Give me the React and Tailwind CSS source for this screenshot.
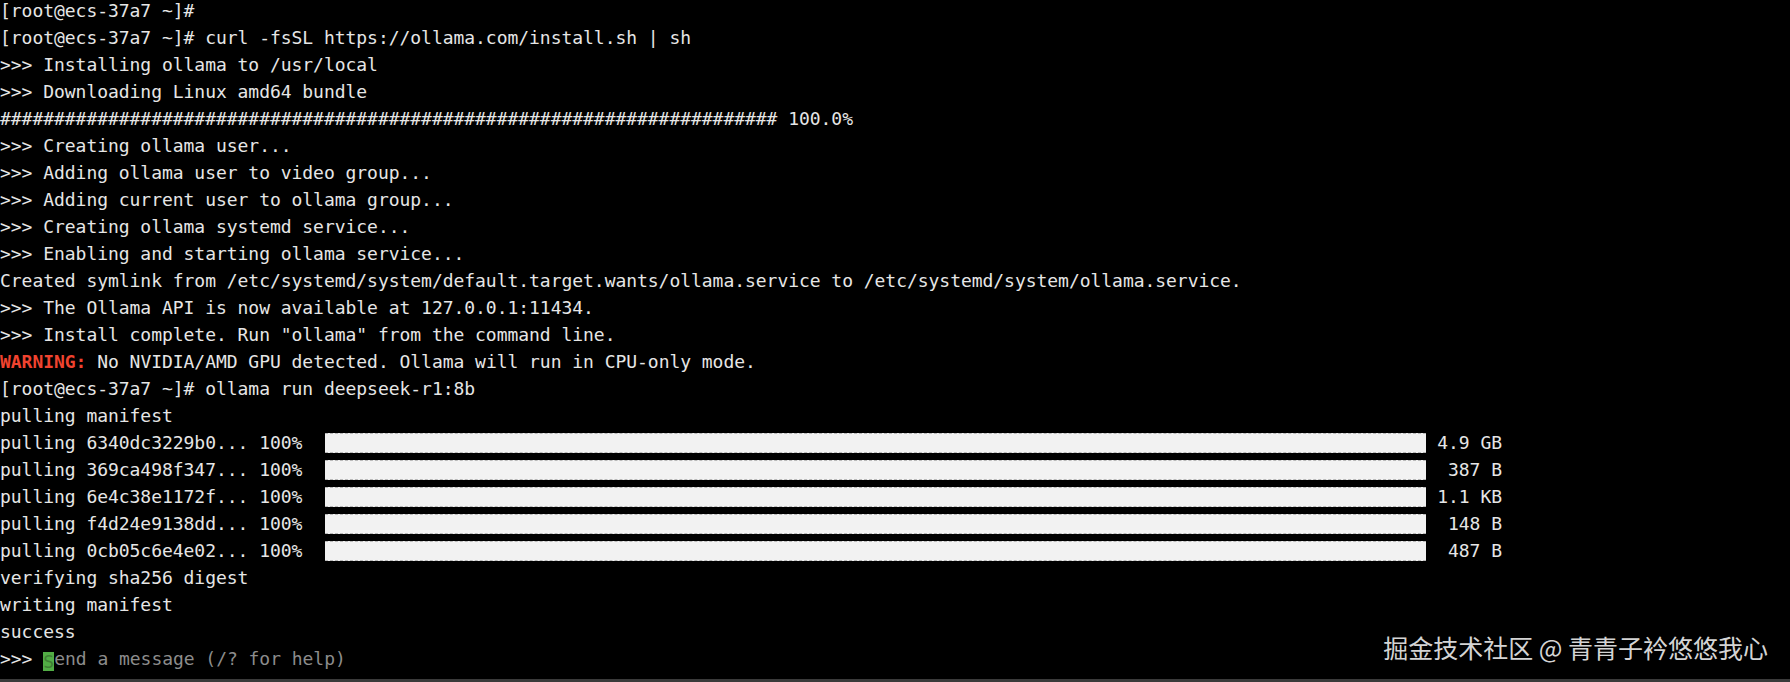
const mono = { fontFamily: '"DejaVu Sans Mono", "Liberation Mono", monospace' };

const plainLines = [
  '[root@ecs-37a7 ~]#',
  '[root@ecs-37a7 ~]# curl -fsSL https://ollama.com/install.sh | sh',
  '>>> Installing ollama to /usr/local',
  '>>> Downloading Linux amd64 bundle',
  '#'.repeat(72) + ' 100.0%',
  '>>> Creating ollama user...',
  '>>> Adding ollama user to video group...',
  '>>> Adding current user to ollama group...',
  '>>> Creating ollama systemd service...',
  '>>> Enabling and starting ollama service...',
  'Created symlink from /etc/systemd/system/default.target.wants/ollama.service to /etc/systemd/system/ollama.service.',
  '>>> The Ollama API is now available at 127.0.0.1:11434.',
  '>>> Install complete. Run "ollama" from the command line.',
];

const pulls = [
  { hash: '6340dc3229b0', size: '4.9 GB' },
  { hash: '369ca498f347', size: '387 B' },
  { hash: '6e4c38e1172f', size: '1.1 KB' },
  { hash: 'f4d24e9138dd', size: '148 B' },
  { hash: '0cb05c6e4e02', size: '487 B' },
];

function Line({ children }) {
  return <div className="h-[27px] leading-[27px] whitespace-pre">{children}</div>;
}

function PullRow({ hash, size }) {
  return (
    <div className="flex items-center h-[27px] leading-[27px] whitespace-pre">
      <span className="w-[325px]">{`pulling ${hash}... 100%`}</span>
      <div className="w-[1101px] h-[20px] bg-[#f2f2f2] border-y border-dashed border-[#b9b9b9]" />
      <span className="w-[76px] text-right">{size}</span>
    </div>
  );
}

export default function App() {
  return (
    <div className="relative w-[1790px] h-[682px] bg-black flex flex-col overflow-hidden">
      <div className="flex-1 text-[18px] tracking-[-0.04px] text-[#e6e6e6] -mt-[3px]" style={mono}>
        {plainLines.map((l, i) => (
          <Line key={i}>{l}</Line>
        ))}
        <Line>
          <span className="text-[#f0432f] font-bold">WARNING:</span> No NVIDIA/AMD GPU detected. Ollama will run in CPU-only mode.
        </Line>
        <Line>[root@ecs-37a7 ~]# ollama run deepseek-r1:8b</Line>
        <Line>pulling manifest</Line>
        {pulls.map((p) => (
          <PullRow key={p.hash} {...p} />
        ))}
        <Line>verifying sha256 digest</Line>
        <Line>writing manifest</Line>
        <Line>success</Line>
        <div className="flex items-center h-[27px] leading-[27px] whitespace-pre">
          <span>{'>>> '}</span>
          <span className="shrink-0 mt-[5px] w-[11px] h-[19px] leading-[19px] bg-[#52ad45] text-[#3f7f35]">S</span>
          <span className="text-[#8c8c8c]">end a message (/? for help)</span>
        </div>
      </div>
      <div className="h-[3px] bg-[#3a3a3a]" />
      <div
        className="absolute right-[22px] top-[632px] text-[25px] leading-[30px] text-[#d4d4d4] whitespace-pre"
        style={{ fontFamily: '"Noto Sans CJK SC", "Noto Sans", sans-serif' }}
      >
        掘金技术社区 @ 青青子衿悠悠我心
      </div>
    </div>
  );
}
